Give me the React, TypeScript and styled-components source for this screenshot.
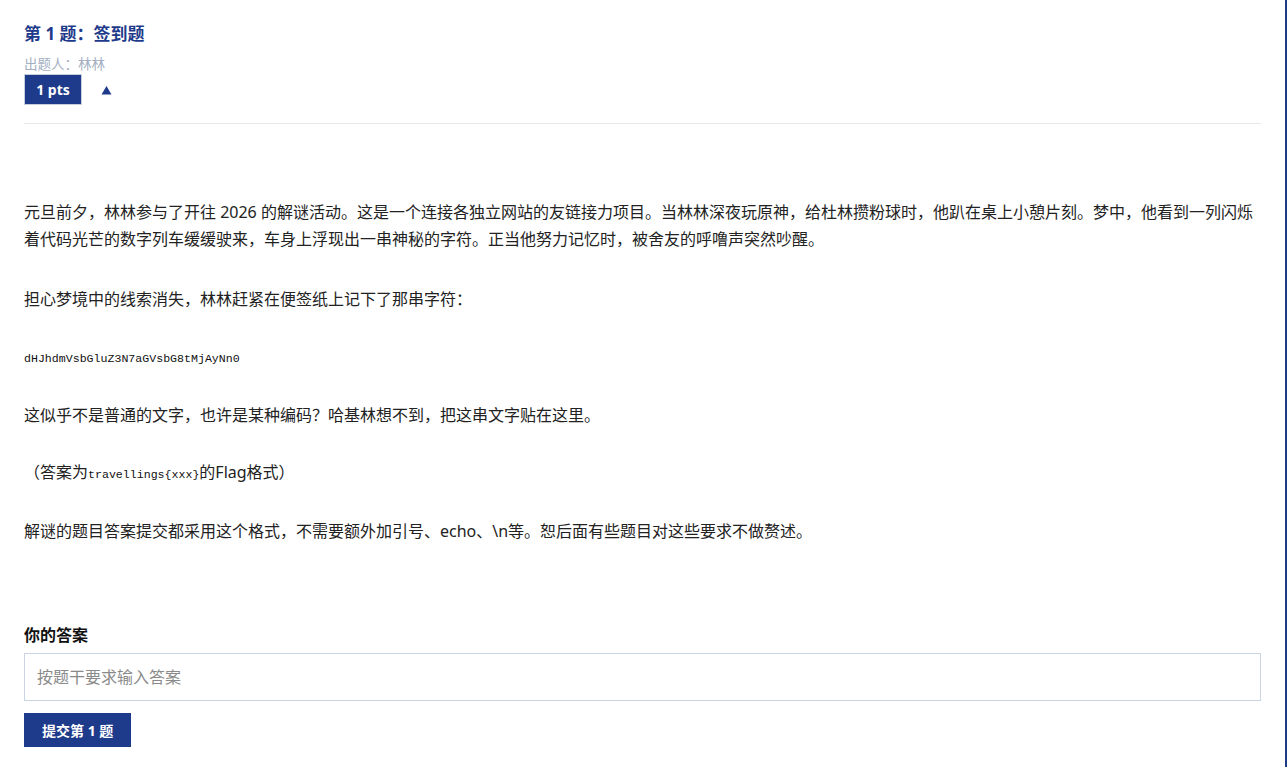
import React, { useState } from "react";
import styled, { createGlobalStyle } from "styled-components";

const primary = "#1e3a8a";

const GlobalStyle = createGlobalStyle`
  html, body {
    margin: 0;
    padding: 0;
    background: #ffffff;
  }
  body {
    font-family: "Noto Sans", "Noto Sans CJK SC", sans-serif;
    color: #222;
  }
`;

const Page = styled.div`
  min-height: 767px;
  box-sizing: border-box;
  border-right: 2px solid ${primary};
  background: #fff;
`;

const Panel = styled.main`
  padding: 22px 24px 20px 24px;
  max-width: 1238px;
`;

const Header = styled.header`
  padding-bottom: 18px;
  border-bottom: 1px solid #e5e7eb;
`;

const Title = styled.h2`
  margin: 0;
  font-size: 17px;
  line-height: 24px;
  font-weight: 700;
  color: ${primary};
`;

const Author = styled.div`
  margin-top: 9px;
  font-size: 13.5px;
  line-height: 18px;
  color: #a3aec2;
`;

const MetaRow = styled.div`
  display: flex;
  align-items: center;
  gap: 19px;
  margin-top: 1px;
`;

const Points = styled.span`
  display: inline-flex;
  align-items: center;
  justify-content: center;
  width: 58px;
  height: 31px;
  box-sizing: border-box;
  background: ${primary};
  border: 1px solid #c7cfdd;
  color: #fff;
  font-size: 14px;
  font-weight: 700;
`;

const Toggle = styled.button`
  display: flex;
  align-items: center;
  border: none;
  background: none;
  padding: 0;
  color: ${primary};
  cursor: pointer;
`;

const Body = styled.section`
  padding-top: 75px;
  font-size: 16px;
  line-height: 27px;
  color: #222;
`;

const Para = styled.p<{ $gap?: number }>`
  margin: 0 0 ${(p) => p.$gap ?? 30}px 0;
`;

const Code = styled.code`
  font-family: "Liberation Mono", "DejaVu Sans Mono", monospace;
  font-size: 11.6px;
  color: #111;
`;

const AnswerBlock = styled.form`
  margin-top: 79px;
`;

const Label = styled.label`
  display: block;
  font-size: 16px;
  font-weight: 700;
  line-height: 22px;
  color: #111;
  margin-bottom: 7px;
`;

const Input = styled.input`
  display: block;
  width: 100%;
  height: 48px;
  box-sizing: border-box;
  border: 1px solid #c9d5e3;
  padding: 0 12px;
  font-family: inherit;
  font-size: 16px;
  color: #222;
  outline: none;
  &::placeholder {
    color: #8a8a8a;
  }
`;

const Submit = styled.button`
  margin-top: 12px;
  height: 34px;
  padding: 0 18px;
  border: none;
  background: ${primary};
  color: #fff;
  font-family: inherit;
  font-size: 14px;
  font-weight: 700;
  cursor: pointer;
`;

function Arrow({ up }: { up: boolean }) {
  return (
    <svg width="11" height="10" viewBox="0 0 11 10">
      <path d={up ? "M5.5 1 L10.5 9.5 L0.5 9.5 Z" : "M0.5 0.5 L10.5 0.5 L5.5 9 Z"} fill="currentColor" />
    </svg>
  );
}

export default function App() {
  const [open, setOpen] = useState(true);
  const [answer, setAnswer] = useState("");

  return (
    <Page>
      <GlobalStyle />
      <Panel>
        <Header>
          <Title>第 1 题：签到题</Title>
          <Author>出题人：林林</Author>
          <MetaRow>
            <Points>1 pts</Points>
            <Toggle type="button" onClick={() => setOpen(!open)} aria-label="toggle">
              <Arrow up={open} />
            </Toggle>
          </MetaRow>
        </Header>

        {open && (
          <Body>
            <Para $gap={33}>
              元旦前夕，林林参与了开往 2026 的解谜活动。这是一个连接各独立网站的友链接力项目。当林林深夜玩原神，给杜林攒粉球时，他趴在桌上小憩片刻。梦中，他看到一列闪烁着代码光芒的数字列车缓缓驶来，车身上浮现出一串神秘的字符。正当他努力记忆时，被舍友的呼噜声突然吵醒。
            </Para>
            <Para>担心梦境中的线索消失，林林赶紧在便签纸上记下了那串字符：</Para>
            <Para>
              <Code>dHJhdmVsbGluZ3N7aGVsbG8tMjAyNn0</Code>
            </Para>
            <Para>这似乎不是普通的文字，也许是某种编码？哈基林想不到，把这串文字贴在这里。</Para>
            <Para>
              （答案为<Code>travellings{"{xxx}"}</Code>的Flag格式）
            </Para>
            <Para $gap={0}>
              解谜的题目答案提交都采用这个格式，不需要额外加引号、echo、\n等。恕后面有些题目对这些要求不做赘述。
            </Para>
          </Body>
        )}

        <AnswerBlock onSubmit={(e) => e.preventDefault()}>
          <Label htmlFor="answer">你的答案</Label>
          <Input
            id="answer"
            value={answer}
            onChange={(e) => setAnswer(e.target.value)}
            placeholder="按题干要求输入答案"
          />
          <Submit type="submit">提交第 1 题</Submit>
        </AnswerBlock>
      </Panel>
    </Page>
  );
}
